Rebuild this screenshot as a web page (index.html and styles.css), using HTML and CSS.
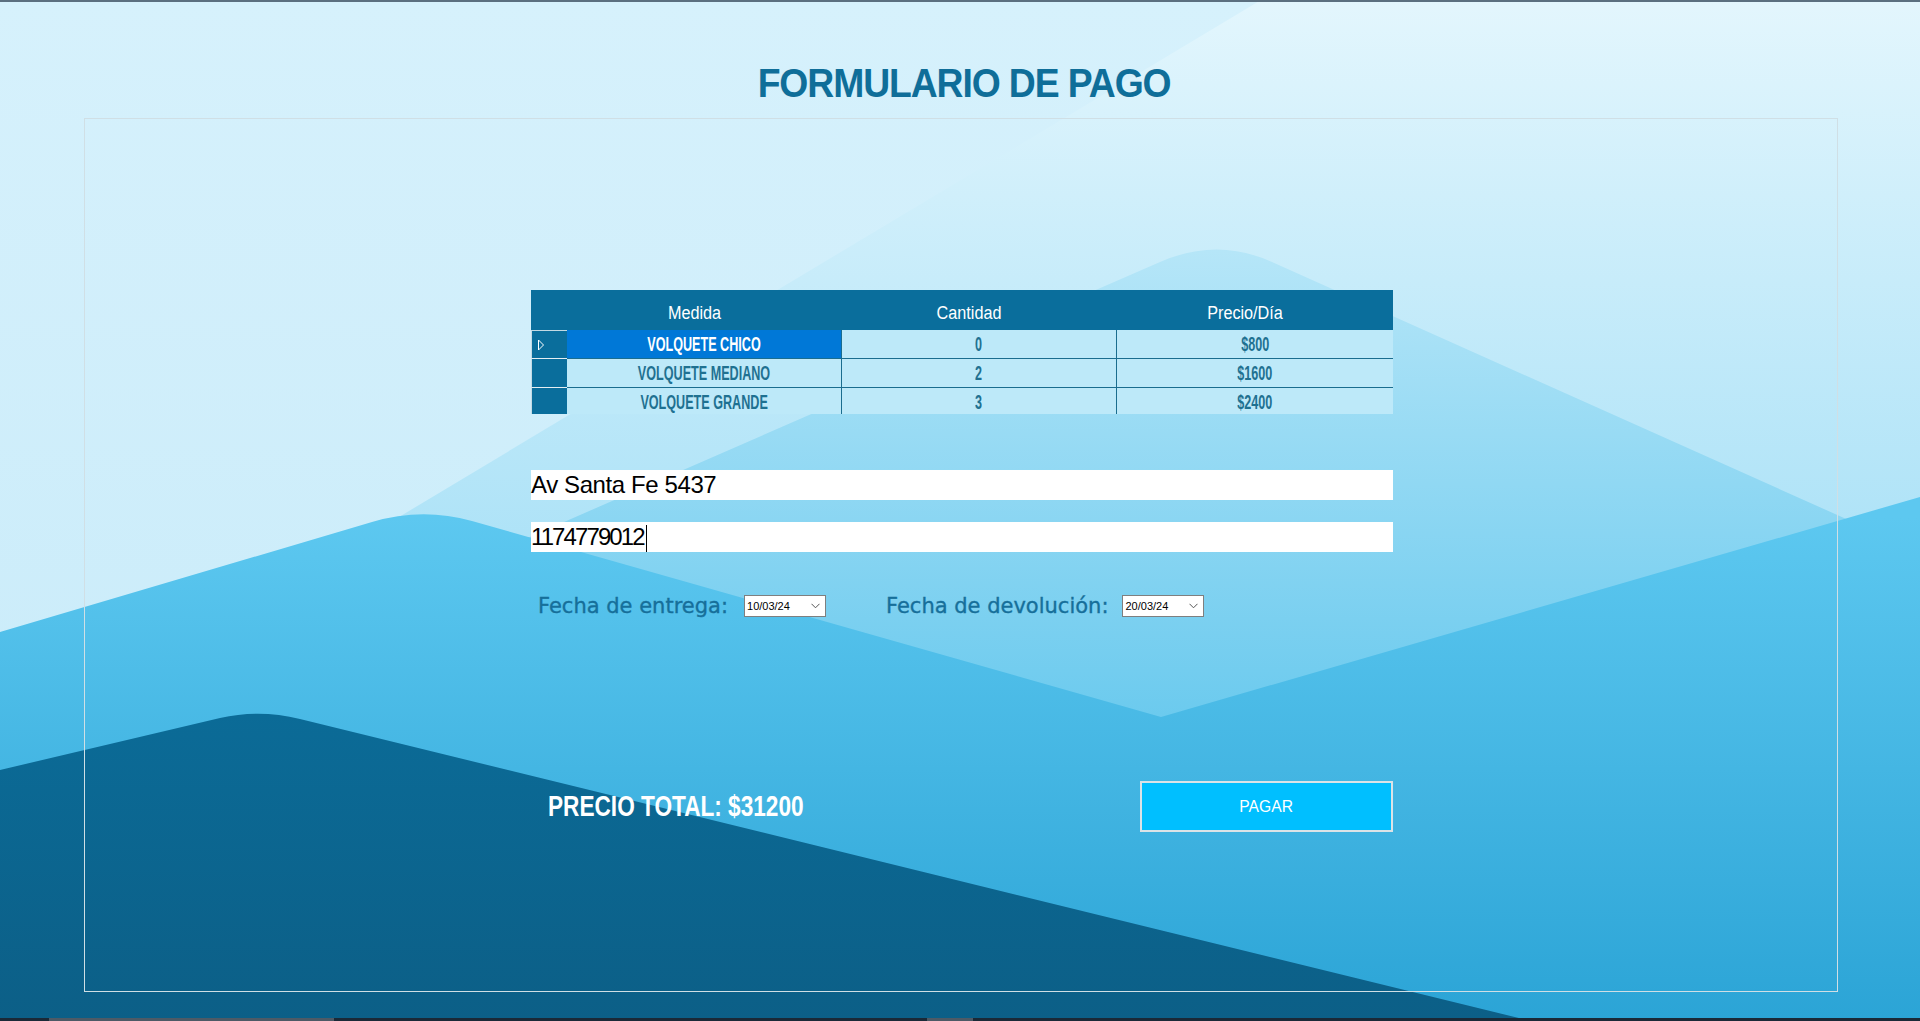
FILE: index.html
```html
<!DOCTYPE html>
<html lang="es">
<head>
<meta charset="utf-8">
<title>Formulario de pago</title>
<link rel="stylesheet" href="styles.css">
</head>
<body>
<svg class="bg" viewBox="0 0 1920 1021" preserveAspectRatio="none" aria-hidden="true">
  <defs>
    <linearGradient id="gBase" x1="0" y1="0" x2="0" y2="1021" gradientUnits="userSpaceOnUse">
      <stop offset="0" stop-color="#d6f1fc"/><stop offset="1" stop-color="#c6eaf9"/>
    </linearGradient>
    <linearGradient id="gD" x1="0" y1="0" x2="0" y2="560" gradientUnits="userSpaceOnUse">
      <stop offset="0" stop-color="#e3f6fd"/><stop offset="1" stop-color="#ace2f7"/>
    </linearGradient>
    <linearGradient id="gA" x1="0" y1="247" x2="0" y2="720" gradientUnits="userSpaceOnUse">
      <stop offset="0" stop-color="#b6e6f8"/><stop offset="1" stop-color="#6bcaee"/>
    </linearGradient>
    <linearGradient id="gB" x1="0" y1="517" x2="0" y2="1021" gradientUnits="userSpaceOnUse">
      <stop offset="0" stop-color="#5dc8f0"/><stop offset="1" stop-color="#2ba4d6"/>
    </linearGradient>
    <linearGradient id="gC" x1="0" y1="713" x2="0" y2="1021" gradientUnits="userSpaceOnUse">
      <stop offset="0" stop-color="#0b6b97"/><stop offset="1" stop-color="#0c5f87"/>
    </linearGradient>
  </defs>
  <rect width="1920" height="1021" fill="url(#gBase)"/>
  <path d="M1261,0 L404,514 L0,757 V1021 H1920 V0 Z" fill="url(#gD)"/>
  <path d="M0,768 L1160,262 Q1217,237 1272,262 L1920,552 V1021 H0 Z" fill="url(#gA)"/>
  <path d="M0,632 L372,522 Q422,507 472,521 L1161,717 L1920,497 V1021 H0 Z" fill="url(#gB)"/>
  <path d="M0,770 L220,718 Q260,709 300,719 L1531,1021 H0 Z" fill="url(#gC)"/>
</svg>

<div class="topbar"></div>
<h1 class="title">FORMULARIO DE PAGO</h1>

<main class="frame">
  <div class="content">
    <div class="grid">
      <div class="grid-head">
        <div class="rh-head"></div>
        <div class="hc"><span>Medida</span></div>
        <div class="hc"><span>Cantidad</span></div>
        <div class="hc"><span>Precio/Día</span></div>
      </div>
      <div class="grid-row first">
        <div class="rh"><svg class="marker" width="8" height="12" viewBox="0 0 8 12"><path d="M1.5 1 L6.5 6 L1.5 11 Z" fill="none" stroke="#ffffff" stroke-width="1"/></svg></div>
        <div class="cell selected line"><span>VOLQUETE CHICO</span></div>
        <div class="cell line"><span>0</span></div>
        <div class="cell"><span>$800</span></div>
      </div>
      <div class="grid-row">
        <div class="rh"></div>
        <div class="cell line"><span>VOLQUETE MEDIANO</span></div>
        <div class="cell line"><span>2</span></div>
        <div class="cell"><span>$1600</span></div>
      </div>
      <div class="grid-row">
        <div class="rh"></div>
        <div class="cell line"><span>VOLQUETE GRANDE</span></div>
        <div class="cell line"><span>3</span></div>
        <div class="cell"><span>$2400</span></div>
      </div>
    </div>

    <div class="field address">Av Santa Fe 5437</div>
    <div class="field phone">1174779012<span class="caret"></span></div>

    <div class="dates">
      <span class="date-label first-label">Fecha de entrega:</span>
      <div class="picker"><span>10/03/24</span><svg width="9" height="6" viewBox="0 0 9 6"><path d="M0.5 0.8 L4.5 4.8 L8.5 0.8" fill="none" stroke="#555" stroke-width="1"/></svg></div>
      <span class="date-label second-label">Fecha de devolución:</span>
      <div class="picker"><span>20/03/24</span><svg width="9" height="6" viewBox="0 0 9 6"><path d="M0.5 0.8 L4.5 4.8 L8.5 0.8" fill="none" stroke="#555" stroke-width="1"/></svg></div>
    </div>

    <div class="footer-row">
      <div class="total"><span>PRECIO TOTAL: $31200</span></div>
      <button class="pay" type="button"><span>PAGAR</span></button>
    </div>
  </div>
</main>

<div class="bottombar"><span class="thumb t1"></span><span class="thumb t2"></span></div>
</body>
</html>
```

FILE: styles.css
```css
html, body {
  margin: 0;
  height: 1021px;
  overflow: hidden;
}
body {
  position: relative;
  display: flex;
  flex-direction: column;
  background: #d5f0fb;
  font-family: "Liberation Sans", Arial, sans-serif;
}
.bg {
  position: absolute;
  left: 0;
  top: 0;
  width: 1920px;
  height: 1021px;
  z-index: 0;
}
.topbar, .title, .frame, .bottombar {
  position: relative;
  z-index: 1;
}
.topbar {
  height: 2px;
  background: #5b6f7f;
  flex: none;
}
.title {
  margin: 58px 0 12px;
  padding-left: 9px;
  height: 46px;
  line-height: 46px;
  text-align: center;
  font-family: "Liberation Sans", Arial, sans-serif;
  font-weight: bold;
  font-size: 41px;
  letter-spacing: -1.2px;
  color: #0f6e99;
  transform: scaleX(0.91);
  flex: none;
}
.frame {
  margin: 0 0 0 84px;
  width: 1754px;
  height: 874px;
  box-sizing: border-box;
  border: 1px solid #d0dfe5;
  padding-top: 171px;
  flex: none;
}
.content {
  width: 862px;
  margin-left: 446px;
}

/* data grid */
.grid {
  height: 124px;
  overflow: hidden;
}
.grid-head, .grid-row {
  display: grid;
  grid-template-columns: 36px 275px 275px 276px;
}
.grid-head {
  height: 40px;
  background: #0a6e9c;
}
.hc {
  display: flex;
  align-items: center;
  justify-content: center;
  box-sizing: border-box;
  padding-top: 6px;
  padding-right: 20px;
  color: #ffffff;
  font-size: 18px;
}
.hc span {
  display: inline-block;
  transform: scaleX(0.9);
  white-space: nowrap;
}
.grid-row {
  height: 29px;
}
.rh {
  background: #0a6e9c;
  border-left: 1px solid #c3dae4;
  border-bottom: 1px solid #e4eef2;
  display: flex;
  align-items: center;
  padding-left: 5px;
}
.first .rh {
  border-top: 1px solid #c3dae4;
  box-sizing: border-box;
}
.cell {
  background: #bde9f9;
  border-bottom: 1px solid #1a6d8f;
  display: flex;
  align-items: center;
  justify-content: center;
  color: #1f7191;
  font-weight: bold;
  font-size: 20px;
}
.cell.line {
  border-right: 1px solid #1a6d8f;
}
.cell span {
  display: inline-block;
  transform: scaleX(0.63);
  white-space: nowrap;
}
.cell.selected {
  background: #0078d7;
  color: #ffffff;
}

/* text fields */
.field {
  height: 30px;
  background: #ffffff;
  color: #000000;
  font-size: 24px;
  line-height: 30px;
  white-space: nowrap;
}
.address {
  margin-top: 56px;
  letter-spacing: -0.4px;
}
.phone {
  margin-top: 22px;
  letter-spacing: -1.9px;
}
.caret {
  display: inline-block;
  width: 1px;
  height: 27px;
  background: #000;
  vertical-align: middle;
  margin-left: 2px;
}

/* dates */
.dates {
  margin-top: 43px;
  height: 22px;
  display: flex;
  align-items: center;
  padding-left: 7px;
}
.date-label {
  font-family: "DejaVu Sans", sans-serif;
  font-size: 21px;
  color: #166f9a;
  -webkit-text-stroke: 0.35px #166f9a;
  white-space: nowrap;
}
.first-label {
  margin-right: 16px;
}
.second-label {
  margin-left: 60px;
  margin-right: 14px;
}
.picker {
  width: 82px;
  height: 22px;
  box-sizing: border-box;
  border: 1px solid #7f7f7f;
  background: #ffffff;
  display: flex;
  align-items: center;
  justify-content: space-between;
  padding: 0 5px 0 2px;
  font-size: 11px;
  color: #000;
}

/* footer */
.footer-row {
  margin-top: 164px;
  height: 51px;
  display: flex;
  align-items: center;
  justify-content: space-between;
}
.total {
  padding-left: 17px;
}
.total span {
  display: inline-block;
  color: #ffffff;
  font-weight: bold;
  font-size: 29px;
  transform: scaleX(0.78);
  transform-origin: left center;
  white-space: nowrap;
}
.pay {
  width: 253px;
  height: 51px;
  box-sizing: border-box;
  background: #00bfff;
  border: 2px solid #dbe3e7;
  color: #ffffff;
  font-family: "Liberation Sans", Arial, sans-serif;
  font-size: 17px;
  padding: 0;
}
.pay span {
  display: inline-block;
  transform: scaleX(0.92);
}

/* bottom bar */
.bottombar {
  margin-top: 26px;
  height: 3px;
  background: #1a2937;
  display: flex;
  flex: none;
}
.thumb {
  display: block;
  height: 3px;
  background: #4d5a66;
}
.t1 {
  margin-left: 49px;
  width: 285px;
}
.t2 {
  margin-left: 593px;
  width: 46px;
}
```
